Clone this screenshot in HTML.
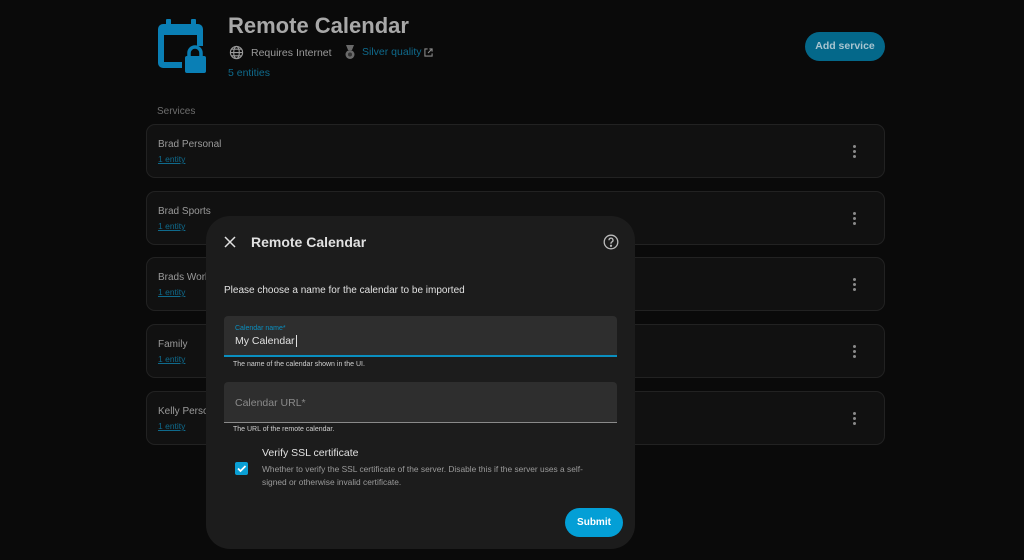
<!DOCTYPE html>
<html><head><meta charset="utf-8"><style>
*{box-sizing:border-box;margin:0;padding:0}
body{width:1024px;height:560px;background:#0a0a0a;font-family:"Liberation Sans",sans-serif;position:relative;overflow:hidden;color:#e1e1e1}
.a{position:absolute}
.card{position:absolute;left:146px;width:739px;height:54px;background:#111;border:1px solid #222;border-radius:9px}
.card .t{position:absolute;left:11px;top:14px;font-size:10px;color:#9a9a9a}
.card .l{position:absolute;left:11px;top:29px;font-size:8.5px;color:#0f6a8c;text-decoration:underline}
.card .d{position:absolute;right:28px;top:20px;width:3px}
.card .d i{display:block;width:3px;height:3px;border-radius:50%;background:#8a8a8a;margin-bottom:2px}
.dlg{position:absolute;left:206px;top:216px;width:429px;height:333px;background:#1c1c1c;border-radius:24px}
.fld{position:absolute;left:18px;width:393px;background:#2e2e2e;border-radius:4px 4px 0 0}
</style></head><body>
<svg class="a" style="left:158px;top:18px" width="50" height="58" viewBox="0 0 50 58">
<rect x="0" y="6" width="45" height="44" rx="5" fill="#0a7fb5"/>
<rect x="8" y="1" width="5" height="10" rx="1" fill="#0a7fb5"/><rect x="33" y="1" width="5" height="10" rx="1" fill="#0a7fb5"/>
<rect x="6" y="17" width="33" height="27" fill="#0a0a0a"/>
<rect x="24" y="28" width="26" height="30" fill="#0a0a0a"/>
<path d="M31 39v-4a6 6 0 0 1 12 0v4" stroke="#0a7fb5" stroke-width="3.5" fill="none"/>
<rect x="27" y="38" width="21" height="17" rx="2" fill="#0a7fb5"/>
</svg>
<div class="a" style="left:228px;top:13px;font-size:22px;font-weight:bold;color:#a8a8a8">Remote Calendar</div>
<svg class="a" style="left:229px;top:45px" width="15" height="15" viewBox="0 0 16 16" fill="none" stroke="#9a9a9a" stroke-width="1.2"><circle cx="8" cy="8" r="6.5"/><ellipse cx="8" cy="8" rx="3" ry="6.5"/><path d="M1.5 8h13M2.5 4.5h11M2.5 11.5h11"/></svg>
<div class="a" style="left:251px;top:47px;font-size:10.5px;color:#9a9a9a">Requires Internet</div>
<svg class="a" style="left:343px;top:44px" width="14" height="16" viewBox="0 0 14 16"><path d="M3 1h8l-2 5H5z" fill="#6a6a6a"/><circle cx="7" cy="10.5" r="4.5" fill="#6a6a6a"/><circle cx="7" cy="10.5" r="2" fill="#333"/></svg>
<div class="a" style="left:362px;top:46px;font-size:10.5px;color:#0f6a8c">Silver quality</div>
<svg class="a" style="left:424px;top:48px" width="9" height="9" viewBox="0 0 10 10" fill="none" stroke="#8a8a8a" stroke-width="1.2"><path d="M4 1H1v8h8V6M6 1h3v3M9 1L4.5 5.5"/></svg>
<div class="a" style="left:228px;top:67px;font-size:10.5px;color:#0f6a8c">5 entities</div>
<div class="a" style="left:805px;top:32px;width:80px;height:29px;border-radius:15px;background:#04688a;color:#a9c5d0;font-size:10.5px;font-weight:bold;text-align:center;line-height:29px">Add service</div>
<div class="a" style="left:157px;top:106px;font-size:10px;color:#6e6e6e">Services</div>
<div class="card" style="top:124px"><div class="t">Brad Personal</div><div class="l">1 entity</div><div class="d"><i></i><i></i><i></i></div></div>
<div class="card" style="top:191px"><div class="t">Brad Sports</div><div class="l">1 entity</div><div class="d"><i></i><i></i><i></i></div></div>
<div class="card" style="top:257px"><div class="t">Brads Work</div><div class="l">1 entity</div><div class="d"><i></i><i></i><i></i></div></div>
<div class="card" style="top:324px"><div class="t">Family</div><div class="l">1 entity</div><div class="d"><i></i><i></i><i></i></div></div>
<div class="card" style="top:391px"><div class="t">Kelly Personal</div><div class="l">1 entity</div><div class="d"><i></i><i></i><i></i></div></div>
<div class="dlg">
<svg class="a" style="left:18px;top:20px" width="12" height="12" viewBox="0 0 12 12" stroke="#e1e1e1" stroke-width="1.5"><path d="M1 1l10 10M11 1L1 11"/></svg>
<div class="a" style="left:45px;top:18px;font-size:14px;font-weight:bold;color:#e1e1e1">Remote Calendar</div>
<svg class="a" style="left:397px;top:18px" width="16" height="16" viewBox="0 0 16 16" fill="none" stroke="#bbb" stroke-width="1.3"><circle cx="8" cy="8" r="6.8"/><path d="M6 6.2a2 2 0 1 1 2.8 1.8c-.6.3-.8.7-.8 1.3v.5"/><circle cx="8" cy="11.8" r=".5" fill="#bbb"/></svg>
<div class="a" style="left:18px;top:69px;font-size:10px;color:#e1e1e1">Please choose a name for the calendar to be imported</div>
<div class="fld" style="top:100px;height:41px;border-bottom:2px solid #0a8fc0">
<div class="a" style="left:11px;top:9px;font-size:7px;color:#0a8fc0">Calendar name*</div>
<div class="a" style="left:11px;top:19px;font-size:10.5px;color:#e1e1e1">My Calendar<span style="border-left:1px solid #e1e1e1;margin-left:1px"></span></div>
</div>
<div class="a" style="left:27px;top:145px;font-size:7px;color:#cfcfcf">The name of the calendar shown in the UI.</div>
<div class="fld" style="top:166px;height:41px;border-bottom:1px solid #8a8a8a">
<div class="a" style="left:11px;top:15px;font-size:10.5px;color:#8a8a8a">Calendar URL*</div>
</div>
<div class="a" style="left:27px;top:210px;font-size:7px;color:#cfcfcf">The URL of the remote calendar.</div>
<div class="a" style="left:29px;top:246px;width:13px;height:13px;background:#0a9fd4;border-radius:2px"></div>
<svg class="a" style="left:29px;top:246px" width="13" height="13" viewBox="0 0 13 13" fill="none" stroke="#fff" stroke-width="1.8"><path d="M3 6.5l2.5 2.5L10.5 4"/></svg>
<div class="a" style="left:56px;top:231px;font-size:10.5px;color:#e1e1e1">Verify SSL certificate</div>
<div class="a" style="left:56px;top:247px;width:345px;font-size:8.4px;line-height:13px;color:#9a9a9a">Whether to verify the SSL certificate of the server. Disable this if the server uses a self-signed or otherwise invalid certificate.</div>
<div class="a" style="left:359px;top:292px;width:58px;height:29px;border-radius:15px;background:#039fd6;color:#fff;font-size:10px;font-weight:bold;text-align:center;line-height:29px">Submit</div>
</div>
</body></html>
